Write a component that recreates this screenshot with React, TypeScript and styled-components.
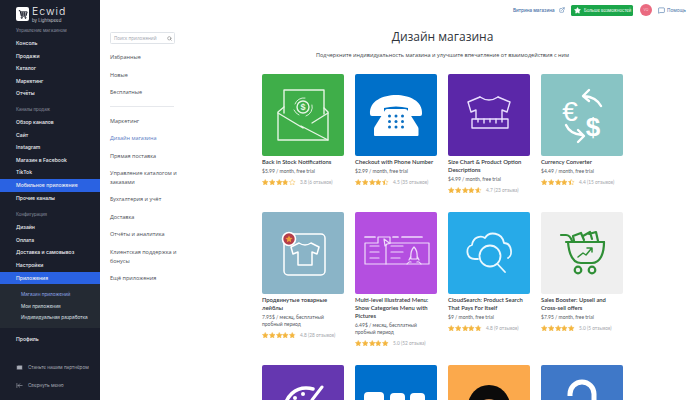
import React from "react";
import styled, {createGlobalStyle} from "styled-components";
import {ArrowLeftToLine, ExternalLink, Mail, MessageSquare, Search, Star} from "lucide-react";

const GlobalStyle = createGlobalStyle`
  html, body {
    margin: 0;
    height: 400px;
    overflow: hidden;
    background: #fff;
  }
  * {
    box-sizing: border-box;
  }
`;

const Page = styled.div`
  display: flex;
  width: 700px;
  height: 400px;
  overflow: hidden;
  font-family: "Open Sans", "Liberation Sans", sans-serif;
`;

const Sidebar = styled.nav`
  width: 100px;
  height: 400px;
  flex: none;
  display: flex;
  flex-direction: column;
  background: #1a1e2b;
  color: #eceef2;
  font-family: Inter, "Liberation Sans", sans-serif;
`;

const Brand = styled.div`
  display: flex;
  align-items: flex-start;
  gap: 2px;
  height: 21px;
  margin: 7px 0 0 16px;
`;

const BrandMark = styled.div`
  width: 13px;
  height: 14px;
  border-radius: 2px;
  background: #fff;
  display: flex;
  align-items: center;
  justify-content: center;
  color: #1a1e2b;
`;

const BrandText = styled.div`
  display: flex;
  flex-direction: column;
  margin-left: 1px;
`;

const BrandName = styled.span`
  font-size: 10.5px;
  line-height: 10px;
  height: 10px;
  font-weight: 300;
  letter-spacing: 1px;
  color: #f4f4f6;
`;

const BrandSub = styled.span`
  font-size: 4.4px;
  line-height: 5px;
  height: 5px;
  margin-top: 0.5px;
  color: #c4c7ce;
`;

const SectionLabel = styled.div`
  height: 12px;
  line-height: 12px;
  padding-left: 16px;
  font-size: 4.4px;
  font-weight: 400;
  color: #8d92a0;
`;

const NavGroup = styled.div<{$top: number}>`
  margin-top: ${p => p.$top}px;
`;

const NavRow = styled.div<{$active?: boolean}>`
  height: 12.6px;
  line-height: 12.6px;
  padding-left: 16px;
  font-size: 5.1px;
  font-weight: 500;
  white-space: nowrap;
  background: ${p => (p.$active ? "#2a62e2" : "transparent")};
`;

const ProfileRow = styled(NavRow)`
  margin-top: 5px;
`;

const SubMenu = styled.div`
  background: #242a33;
  padding: 5px 0 4px;
  height: 44px;
`;

const SubRow = styled.div<{$active?: boolean}>`
  height: 11.6px;
  line-height: 11.6px;
  padding-left: 21px;
  font-size: 4.7px;
  color: ${p => (p.$active ? "#8ea6e8" : "#dfe2e8")};
  white-space: nowrap;
`;

const SidebarFoot = styled.div`
  margin-top: 16px;
  display: flex;
  flex-direction: column;
  gap: 6px;
`;

const FootRow = styled.div`
  display: flex;
  align-items: center;
  gap: 5px;
  height: 12px;
  padding-left: 16px;
  font-size: 4.6px;
  color: #a8acb6;
`;

const Main = styled.div`
  flex: 1;
  min-width: 0;
  display: flex;
  flex-direction: column;
`;

const Topbar = styled.header`
  height: 20px;
  flex: none;
  display: flex;
  align-items: center;
  padding: 0 14px 0 413px;
  font-family: Inter, "Liberation Sans", sans-serif;
  font-size: 4.6px;
  color: #3f6ea5;
`;

const StoreLink = styled.span`
  display: flex;
  align-items: center;
  gap: 4px;
  width: 58px;
  font-weight: 500;
  white-space: nowrap;
`;

const UpgradeButton = styled.span`
  display: flex;
  align-items: center;
  gap: 3px;
  width: 62px;
  height: 11px;
  padding-left: 3px;
  border-radius: 1.5px;
  background: #1ba64a;
  color: #fff;
  font-size: 4.2px;
  white-space: nowrap;
`;

const Avatar = styled.span`
  width: 12px;
  height: 12px;
  margin: 0 6px 0 7px;
  border-radius: 50%;
  background: #ea6a80;
  color: #f6c6cf;
  font-size: 3.5px;
  line-height: 12px;
  text-align: center;
`;

const HelpLink = styled.span`
  display: flex;
  align-items: center;
  gap: 2px;
  white-space: nowrap;
`;

const Body = styled.div`
  flex: 1;
  min-height: 0;
  display: flex;
`;

const Categories = styled.aside`
  width: 162px;
  flex: none;
  padding: 12px 0 0 10px;
  font-size: 5.5px;
  color: #4a4e56;
`;

const SearchBox = styled.div`
  width: 65px;
  height: 12px;
  display: flex;
  align-items: center;
  justify-content: space-between;
  padding: 0 2px 0 3px;
  margin-bottom: 5px;
  border: 1px solid #dfe3e8;
  border-radius: 1.5px;
  font-size: 4.5px;
  color: #9aa0aa;
`;

const Category = styled.div<{$active?: boolean}>`
  width: 72px;
  padding: 4.4px 0;
  line-height: 8.7px;
  color: ${p => (p.$active ? "#5a7cc4" : "inherit")};
`;

const Divider = styled.hr`
  width: 64px;
  height: 1px;
  margin: 5px 0 5px;
  border: 0;
  background: #e6e8ec;
`;

const Content = styled.main`
  width: 361px;
  flex: none;
`;

const Heading = styled.h1`
  margin: 8px 0 0;
  font-size: 12px;
  line-height: 18px;
  font-weight: 400;
  text-align: center;
  color: #30343b;
`;

const Lead = styled.p`
  margin: 5px 0 15px;
  font-size: 5.5px;
  line-height: 8px;
  text-align: center;
  color: #3b3f47;
  white-space: nowrap;
`;

const CardGrid = styled.div`
  display: grid;
  grid-template-columns: repeat(4, 82px);
  column-gap: 11px;
  row-gap: 18px;
  align-items: start;
`;

const Card = styled.article`
  font-family: Lato, "Open Sans", "Liberation Sans", sans-serif;
`;

const Tile = styled.div<{$bg: string}>`
  width: 82px;
  height: 82px;
  border-radius: 2px;
  background: ${p => p.$bg};
  svg {
    display: block;
  }
`;

const CardTitle = styled.div`
  margin-top: 2px;
  font-size: 5.85px;
  line-height: 8px;
  font-weight: 600;
  color: #33373d;
`;

const CardPrice = styled.div`
  margin-top: 2px;
  font-size: 5px;
  line-height: 7px;
  color: #55595f;
`;

const RatingRow = styled.div`
  display: flex;
  align-items: center;
  margin-top: 3px;
  height: 8px;
`;

const Stars = styled.div`
  display: flex;
  width: 38px;
  flex: none;
  gap: 0.3px;
`;

const RatingText = styled.span`
  font-size: 4.8px;
  color: #a3a6ab;
  white-space: nowrap;
`;

const StarIcon = ({fill}: {fill: number}) => (
    <svg width="6.5" height="6.5" viewBox="0 0 24 24">
        <defs>
            <linearGradient id={`star-${fill}`}>
                <stop offset={`${fill * 100}%`} stopColor="#f4b63f"/>
                <stop offset={`${fill * 100}%`} stopColor="#fff"/>
            </linearGradient>
        </defs>
        <path d="M12 1.5l3.2 6.9 7.5.9-5.6 5.1 1.5 7.4L12 18.1l-6.6 3.7 1.5-7.4L1.3 9.3l7.5-.9z"
              fill={`url(#star-${fill})`} stroke="#f4b63f" strokeWidth="1.6"/>
    </svg>
);

const Rating = ({value, label}: {value: number, label: string}) => (
    <RatingRow>
        <Stars>
            {[0, 1, 2, 3, 4].map(i => (
                <StarIcon key={i} fill={Math.max(0, Math.min(1, value - i))}/>
            ))}
        </Stars>
        <RatingText>{label}</RatingText>
    </RatingRow>
);

const Art = ({children, color = "#fff", width = 1.4}: {children: React.ReactNode, color?: string, width?: number}) => (
    <svg width="82" height="82" viewBox="0 0 82 82" fill="none" stroke={color} strokeWidth={width}
         strokeLinecap="round" strokeLinejoin="round">
        {children}
    </svg>
);

const EnvelopeArt = () => (
    <Art color="#e6f5e4">
        <path d="M22 39V16h40v24"/>
        <path d="M22 33l-6 5v28h50V38l-4-4"/>
        <path d="M16 39l25 15M66 66L39 52M66 39L50 49"/>
        <circle cx="41" cy="33" r="6"/>
        <path d="M33 30a9 9 0 0 1 10-6M50 31a9 9 0 0 1-6 11M32 36a10 10 0 0 0 5 5" strokeWidth="0.9"/>
        <text x="41" y="36" textAnchor="middle" fontSize="9" fontWeight="700" fill="#e6f5e4" stroke="none"
              fontFamily="Liberation Sans">$</text>
    </Art>
);

const PhoneArt = () => (
    <Art>
        <path fill="#fff" stroke="none"
              d="M15 40C14 27 28 21 41 21s27 6 26 19q0 2-2 2H55q-2 0-2-2v-6q-12-3-24 0v6q0 2-2 2H17q-2 0-2-2z"/>
        <path fill="#fff" stroke="none" d="M32 35h18q2 0 3 2l10 16q0.500 1 0.500 2v6q0 1-1 1H20q-1 0-1-1v-6q0-1 0.500-2l10-16q1-2 2.500-2z"/>
        {[42, 47.500, 53].map(y => [34.500, 41, 47.500].map(x => (
            <circle key={`${x}-${y}`} cx={x} cy={y} r="1.5" fill="#0a6fc2" stroke="none"/>
        )))}
    </Art>
);

const ShirtArt = () => (
    <Art color="#eadfff">
        <path d="M32 23l-12 5 3 10 5-2v9M50 23l12 5-3 10-5-2v9"/>
        <path d="M32 23q9 6 18 0"/>
        <rect x="24" y="45" width="36" height="9"/>
        <path d="M30 45v3M36 45v4M42 45v3M48 45v4M54 45v3"/>
    </Art>
);

const CurrencyArt = () => (
    <Art width={2.4}>
        <text x="29" y="47" textAnchor="middle" fontSize="28" fill="#fff" stroke="none"
              fontFamily="Liberation Sans">€</text>
        <text x="52" y="62" textAnchor="middle" fontSize="26" fontWeight="700" fill="#fff" stroke="none"
              fontFamily="Liberation Sans">$</text>
        <path d="M60 32q-5-9-17-10M48 16l-6 6 6 5"/>
        <path d="M25 51q4 9 16 10M37 56l6 6-6 6"/>
    </Art>
);

const LabelArt = () => (
    <Art width={1.5}>
        <rect x="22" y="22" width="41" height="41" rx="4"/>
        <circle cx="27" cy="27" r="6.500" fill="#b43d4a" strokeWidth="1.6"/>
        <path d="M27 23.500l1.100 2.300 2.500.300-1.900 1.700.500 2.500L27 29l-2.200 1.300.500-2.500-1.900-1.700 2.500-.300z"
              fill="#f0a03c" stroke="none"/>
        <path d="M37 31l-8 4 2 7 5-2v13h14V40l5 2 2-7-8-4q-6 4-12 0z"/>
    </Art>
);

const MenuArt = () => (
    <Art color="#f0dcfb" width={1.2}>
        <path d="M10 25h10M38 25h5M47 25h20" strokeWidth="1.700"/>
        <path d="M10 31h13v-6h12v6h39M10 31v21M74 31v21M10 52h64"/>
        <path d="M15 34h9M15 40h9M15 46h9M36 34h12M36 40h12M36 46h9M31 31v21"/>
        <path d="M29 27l1 7 2-2 3-.500z" fill="#b450e0"/>
        <path d="M59 35q4 4 3 12h-6q-1-8 3-12zM56 44l-2 4M62 44l2 4M52 52q2-3 4-2M66 52q-2-3-4-2"/>
    </Art>
);

const CloudArt = () => (
    <Art color="#eaf8ff" width={1.8}>
        <path d="M30 47h-3c-9 0-10-12-3-14 1-8 9-10 13-7 4-7 17-6 19 5 8 0 9 13 4 15"/>
        <circle cx="42" cy="44" r="10.500"/>
        <path d="M49.500 52L57 60"/>
    </Art>
);

const CartArt = () => (
    <Art color="#2f8f36" width={2.2}>
        <path d="M20 23h5c3 0 5 3 6 6"/>
        <path d="M25 30h38"/>
        <path d="M27 30c1 12 4 21 13 21h11c8 0 12-9 12-21"/>
        <circle cx="37" cy="58" r="3.300"/>
        <circle cx="51" cy="58" r="3.300"/>
        <path d="M33 29l-1-5 8-3 3 7M42 24l7-4 2 7M48 22l7-2 2 9"/>
        <path d="M37 45l5-4 3 2 5-6M46 36h5v4" strokeWidth="1.500"/>
    </Art>
);

const PaletteArt = () => (
    <Art width={3.5}>
        <path d="M22 45C24 30 34 23 44 23q4 0 7 1"/>
        <path d="M50 35l10-13" strokeWidth="3"/>
        <circle cx="41" cy="29" r="2" fill="#fff" stroke="none"/>
        <circle cx="33" cy="33" r="2" fill="#fff" stroke="none"/>
    </Art>
);

const TilesArt = () => (
    <svg width="82" height="82" viewBox="0 0 82 82">
        <rect x="9" y="27" width="20" height="20" rx="4" fill="#fff"/>
        <rect x="35" y="28" width="15" height="20" rx="4" fill="#fff"/>
        <rect x="55" y="28" width="15" height="20" rx="4" fill="#fff"/>
    </svg>
);

const FaceArt = () => (
    <svg width="82" height="82" viewBox="0 0 82 82">
        <circle cx="41" cy="41" r="21" fill="#0b0b0b"/>
        <ellipse cx="41" cy="40" rx="9" ry="6" fill="#c98b55"/>
    </svg>
);

const LockArt = () => (
    <Art width={5}>
        <path d="M29 31v-2a12 12 0 0 1 24 0v22" strokeLinecap="butt"/>
    </Art>
);

const cards = [
    {bg: "#3fae49", art: <EnvelopeArt/>, title: "Back in Stock Notifications", price: "$5.99 / month, free trial", value: 3.8, label: "3.8 (6 отзывов)"},
    {bg: "#0070c9", art: <PhoneArt/>, title: "Checkout with Phone Number", price: "$2.99 / month, free trial", value: 4.5, label: "4.5 (35 отзывов)"},
    {bg: "#5b27a8", art: <ShirtArt/>, title: "Size Chart & Product Option Descriptions", price: "$4.99 / month, free trial", value: 4.7, label: "4.7 (23 отзыва)"},
    {bg: "#88c4c4", art: <CurrencyArt/>, title: "Currency Converter", price: "$4.49 / month, free trial", value: 4.4, label: "4.4 (15 отзывов)"},
    {bg: "#8ab4c7", art: <LabelArt/>, title: "Продвинутые товарные лейблы", price: "7.95$ / месяц, бесплатный пробный период", value: 4.8, label: "4.8 (28 отзывов)"},
    {bg: "#b44fe0", art: <MenuArt/>, title: "Multi-level Illustrated Menu: Show Categories Menu with Pictures", price: "6.49$ / месяц, бесплатный пробный период", value: 5, label: "5.0 (52 отзыва)"},
    {bg: "#27aae8", art: <CloudArt/>, title: "CloudSearch: Product Search That Pays For Itself", price: "$9 / month, free trial", value: 4.8, label: "4.8 (9 отзывов)"},
    {bg: "#efefef", art: <CartArt/>, title: "Sales Booster: Upsell and Cross-sell offers", price: "$7.95 / month, free trial", value: 5, label: "5.0 (5 отзывов)"},
];

const partialTiles = [
    {bg: "#6537b0", art: <PaletteArt/>},
    {bg: "#0070cc", art: <TilesArt/>},
    {bg: "#fba94c", art: <FaceArt/>},
    {bg: "#3f78c8", art: <LockArt/>},
];

export default function App() {
    return (
        <Page>
            <GlobalStyle/>
            <Sidebar>
                <Brand>
                    <BrandMark>
                        <svg width="10" height="10" viewBox="0 0 24 24" fill="none" stroke="#1a1e2b" strokeWidth="2.400">
                            <path d="M2 4h3l3 13h11l3-10H6"/>
                            <path d="M10 7v10M15 7v10M7 12h14"/>
                            <circle cx="9" cy="21" r="1.500"/>
                            <circle cx="18" cy="21" r="1.500"/>
                        </svg>
                    </BrandMark>
                    <BrandText>
                        <BrandName>Ecwid</BrandName>
                        <BrandSub>by Lightspeed</BrandSub>
                    </BrandText>
                </Brand>

                <NavGroup $top={-3}>
                    <SectionLabel>Управление магазином</SectionLabel>
                    <NavRow>Консоль</NavRow>
                    <NavRow>Продажи</NavRow>
                    <NavRow>Каталог</NavRow>
                    <NavRow>Маркетинг</NavRow>
                    <NavRow>Отчёты</NavRow>
                </NavGroup>

                <NavGroup $top={4}>
                    <SectionLabel>Каналы продаж</SectionLabel>
                    <NavRow>Обзор каналов</NavRow>
                    <NavRow>Сайт</NavRow>
                    <NavRow>Instagram</NavRow>
                    <NavRow>Магазин в Facebook</NavRow>
                    <NavRow>TikTok</NavRow>
                    <NavRow $active>Мобильное приложение</NavRow>
                    <NavRow>Прочие каналы</NavRow>
                </NavGroup>

                <NavGroup $top={5}>
                    <SectionLabel>Конфигурация</SectionLabel>
                    <NavRow>Дизайн</NavRow>
                    <NavRow>Оплата</NavRow>
                    <NavRow>Доставка и самовывоз</NavRow>
                    <NavRow>Настройки</NavRow>
                    <NavRow $active>Приложения</NavRow>
                    <SubMenu>
                        <SubRow $active>Магазин приложений</SubRow>
                        <SubRow>Мои приложения</SubRow>
                        <SubRow>Индивидуальная разработка</SubRow>
                    </SubMenu>
                    <ProfileRow>Профиль</ProfileRow>
                </NavGroup>

                <SidebarFoot>
                    <FootRow><Mail size={7} fill="#a8acb6" stroke="#1a1e2b"/> Станьте нашим партнёром</FootRow>
                    <FootRow><ArrowLeftToLine size={7}/> Свернуть меню</FootRow>
                </SidebarFoot>
            </Sidebar>

            <Main>
                <Topbar>
                    <StoreLink>Витрина магазина <ExternalLink size={6}/></StoreLink>
                    <UpgradeButton><Star size={7} fill="#fff" stroke="#fff"/> Больше возможностей</UpgradeButton>
                    <Avatar>VO</Avatar>
                    <HelpLink><MessageSquare size={7}/> Помощь</HelpLink>
                </Topbar>

                <Body>
                    <Categories>
                        <SearchBox>Поиск приложений <Search size={5} color="#555"/></SearchBox>
                        <Category>Избранные</Category>
                        <Category>Новые</Category>
                        <Category>Бесплатные</Category>
                        <Divider/>
                        <Category>Маркетинг</Category>
                        <Category $active>Дизайн магазина</Category>
                        <Category>Прямая поставка</Category>
                        <Category>Управление каталогом и заказами</Category>
                        <Category>Бухгалтерия и учёт</Category>
                        <Category>Доставка</Category>
                        <Category>Отчёты и аналитика</Category>
                        <Category>Клиентская поддержка и бонусы</Category>
                        <Category>Ещё приложения</Category>
                    </Categories>

                    <Content>
                        <Heading>Дизайн магазина</Heading>
                        <Lead>Подчеркните индивидуальность магазина и улучшите впечатление от взаимодействия с ним</Lead>
                        <CardGrid>
                            {cards.map(card => (
                                <Card key={card.title}>
                                    <Tile $bg={card.bg}>{card.art}</Tile>
                                    <CardTitle>{card.title}</CardTitle>
                                    <CardPrice>{card.price}</CardPrice>
                                    <Rating value={card.value} label={card.label}/>
                                </Card>
                            ))}
                            {partialTiles.map(tile => (
                                <Tile key={tile.bg} $bg={tile.bg}>{tile.art}</Tile>
                            ))}
                        </CardGrid>
                    </Content>
                </Body>
            </Main>
        </Page>
    );
}
